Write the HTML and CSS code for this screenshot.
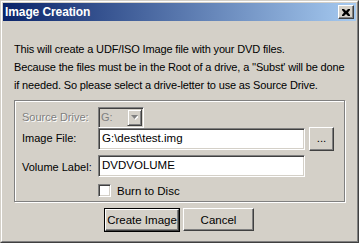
FILE: index.html
```html
<!DOCTYPE html>
<html lang="en">
<head>
    <meta charset="UTF-8">
    <title>Image Creation</title>
    <link rel="stylesheet" href="styles.css">
</head>
<body>
    <div class="window">
        <div class="frame">
            <div class="titlebar">
                <span class="title">Image Creation</span>
                <div class="close">
                    <svg width="8" height="7" viewBox="0 0 8 7">
                        <path d="M0 0h2l2 2 2-2h2v1l-2 2.5 2 2.5v1h-2l-2-2-2 2h-2v-1l2-2.5-2-2.5z" fill="#000"/>
                    </svg>
                </div>
            </div>
            <div class="content">
                <p class="intro">This will create a UDF/ISO Image file with your DVD files.<br>Because the files must be in the Root of a drive, a ''Subst' will be done<br>if needed. So please select a drive-letter to use as Source Drive.</p>

                <div class="group">
                    <div class="row">
                        <span class="label disabled">Source Drive:</span>
                        <div class="combo">
                            <span class="combo-text">G:</span>
                            <span class="combo-arrow">
                                <svg width="7" height="5" viewBox="0 0 7 5">
                                    <path d="M1 1h7l-3.5 4z" fill="#fff"/>
                                    <path d="M0 0h7l-3.5 4z" fill="#808080"/>
                                </svg>
                            </span>
                        </div>
                    </div>
                    <div class="row row-file">
                        <span class="label">Image File:</span>
                        <div class="textbox">G:\dest\test.img</div>
                        <div class="button browse">...</div>
                    </div>
                    <div class="row row-volume">
                        <span class="label">Volume Label:</span>
                        <div class="textbox">DVDVOLUME</div>
                    </div>
                    <div class="row row-check">
                        <span class="checkbox"></span>
                        <span class="check-label">Burn to Disc</span>
                    </div>
                </div>

                <div class="actions">
                    <div class="button default"><span class="inner">Create Image</span></div>
                    <div class="button cancel">Cancel</div>
                </div>
            </div>
        </div>
    </div>
</body>
</html>
```

FILE: styles.css
```css
* {
    box-sizing: border-box;
}

body {
    margin: 0;
    background: #d4d0c8;
    font-family: 'Liberation Sans', Arial, sans-serif;
    font-size: 11px;
    color: #000;
}

.window {
    width: 359px;
    height: 243px;
    border: 1px solid;
    border-color: #d4d0c8 #404040 #404040 #d4d0c8;
    background: #d4d0c8;
}

.frame {
    height: 100%;
    border: 1px solid;
    border-color: #fff #808080 #808080 #fff;
    padding: 1px;
}

.titlebar {
    height: 18px;
    display: flex;
    align-items: center;
    justify-content: space-between;
    padding: 0 2px 0 2px;
    background: linear-gradient(to right, #0a246a, #a6caf0);
}

.title {
    color: #fff;
    font-weight: bold;
    font-size: 12px;
    letter-spacing: -0.1px;
}

.close {
    width: 16px;
    height: 14px;
    display: flex;
    align-items: center;
    justify-content: center;
    background: #d4d0c8;
    border: 1px solid;
    border-color: #fff #404040 #404040 #fff;
    box-shadow: inset -1px -1px 0 #808080;
}

.content {
    padding: 19px 11px 0 11px;
}

.intro {
    margin: 0;
    line-height: 18px;
    letter-spacing: -0.15px;
    white-space: nowrap;
}

.group {
    margin-top: 6px;
    width: 331px;
    border: 1px solid #808080;
    box-shadow: inset 1px 1px 0 #fff, 1px 1px 0 #fff;
    padding: 6px 0 4px 7px;
}

.row {
    display: flex;
    align-items: flex-start;
}

.label {
    width: 76px;
    line-height: 21px;
    white-space: nowrap;
}

.disabled {
    color: #808080;
    text-shadow: 1px 1px 0 #fff;
}

.combo {
    width: 46px;
    height: 21px;
    display: flex;
    justify-content: space-between;
    border: 1px solid;
    border-color: #808080 #fff #fff #808080;
    box-shadow: inset 1px 1px 0 #404040, inset -1px -1px 0 #d4d0c8;
    padding: 1px;
}

.combo-text {
    color: #808080;
    padding: 2px 0 0 1px;
}

.combo-arrow {
    width: 15px;
    height: 17px;
    display: flex;
    align-items: center;
    justify-content: center;
    border: 1px solid;
    border-color: #d4d0c8 #404040 #404040 #d4d0c8;
    box-shadow: inset 1px 1px 0 #fff, inset -1px -1px 0 #808080;
}

.textbox {
    width: 207px;
    height: 22px;
    background: #fff;
    border: 1px solid;
    border-color: #808080 #fff #fff #808080;
    box-shadow: inset 1px 1px 0 #404040, inset -1px -1px 0 #d4d0c8;
    padding: 2px 3px;
    line-height: 14px;
    font-size: 11.5px;
}

.row-file {
    margin-top: 0;
}

.row-volume {
    margin-top: 4px;
}

.row-volume .label {
    line-height: 24px;
}

.button {
    background: #d4d0c8;
    border: 1px solid;
    border-color: #fff #404040 #404040 #fff;
    box-shadow: inset -1px -1px 0 #808080;
    display: flex;
    align-items: center;
    justify-content: center;
    font-size: 11.5px;
}

.browse {
    width: 25px;
    height: 24px;
    margin: -1px 0 0 4px;
    padding-bottom: 2px;
}

.row-check {
    margin-top: 5px;
    padding-left: 76px;
    align-items: center;
}

.checkbox {
    width: 13px;
    height: 13px;
    background: #fff;
    border: 1px solid;
    border-color: #808080 #fff #fff #808080;
    box-shadow: inset 1px 1px 0 #404040, inset -1px -1px 0 #d4d0c8;
}

.check-label {
    margin-left: 6px;
    font-size: 11.5px;
}

.actions {
    display: flex;
    justify-content: center;
    gap: 3px;
    margin-top: 6px;
    padding-right: 1px;
}

.default {
    width: 76px;
    height: 24px;
    border: 1px solid #000;
    box-shadow: none;
    padding: 0;
}

.default .inner {
    width: 100%;
    height: 100%;
    display: flex;
    align-items: center;
    justify-content: center;
    border: 1px solid;
    border-color: #fff #404040 #404040 #fff;
    box-shadow: inset -1px -1px 0 #808080;
}

.cancel {
    width: 71px;
    height: 23px;
}
```
